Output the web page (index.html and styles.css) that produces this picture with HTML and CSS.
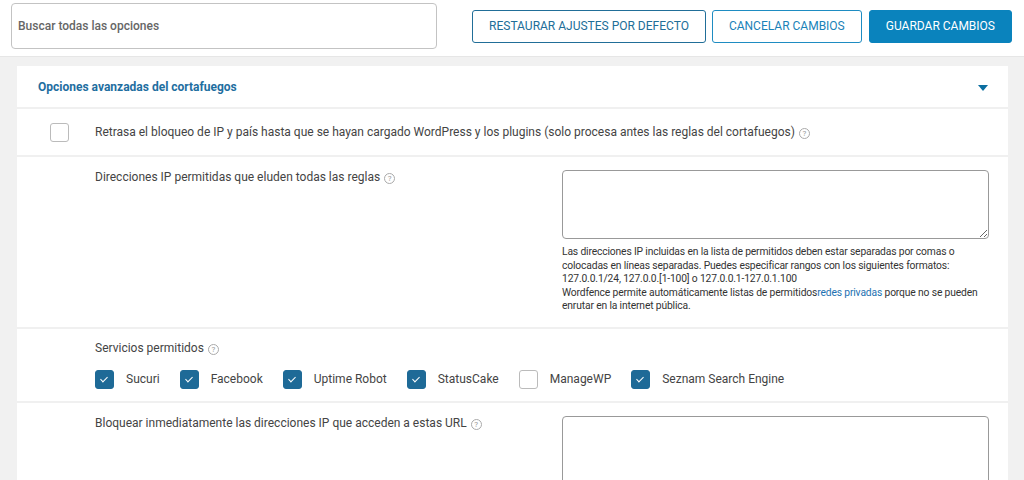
FILE: index.html
```html
<!DOCTYPE html>
<html lang="es">
<head>
    <meta charset="UTF-8">
    <title>Opciones del cortafuegos</title>
    <link rel="stylesheet" href="styles.css">
</head>
<body>

    <div class="topbar">
        <input class="search" type="text" placeholder="Buscar todas las opciones">
        <div class="actions">
            <a class="btn">Restaurar ajustes por defecto</a>
            <a class="btn btn-light">Cancelar cambios</a>
            <a class="btn btn-primary">Guardar cambios</a>
        </div>
    </div>

    <div class="page">
        <div class="panel">
            <div class="panel-head">
                <h3>Opciones avanzadas del cortafuegos</h3>
                <span class="caret"></span>
            </div>

            <!-- delay blocking -->
            <div class="row row-check">
                <span class="box"></span>
                <span class="label">Retrasa el bloqueo de IP y país hasta que se hayan cargado WordPress y los plugins (solo procesa antes las reglas del cortafuegos) <span class="help">?</span></span>
            </div>

            <!-- allowlisted IPs -->
            <div class="row row-split">
                <div class="label">Direcciones IP permitidas que eluden todas las reglas <span class="help">?</span></div>
                <div class="field">
                    <textarea></textarea>
                    <p class="note">Las direcciones IP incluidas en la lista de permitidos deben estar separadas por comas o colocadas en líneas separadas. Puedes especificar rangos con los siguientes formatos: 127.0.0.1/24, 127.0.0.[1-100] o 127.0.0.1-127.0.1.100<br>Wordfence permite automáticamente listas de permitidos<a href="#">redes privadas</a> porque no se pueden enrutar en la internet pública.</p>
                </div>
            </div>

            <!-- allowed services -->
            <div class="row row-services">
                <div class="label">Servicios permitidos <span class="help">?</span></div>
                <div class="services">
                    <span class="service"><span class="box checked"></span>Sucuri</span>
                    <span class="service"><span class="box checked"></span>Facebook</span>
                    <span class="service"><span class="box checked"></span>Uptime Robot</span>
                    <span class="service"><span class="box checked"></span>StatusCake</span>
                    <span class="service"><span class="box"></span>ManageWP</span>
                    <span class="service"><span class="box checked"></span>Seznam Search Engine</span>
                </div>
            </div>

            <!-- block URLs -->
            <div class="row row-split">
                <div class="label">Bloquear inmediatamente las direcciones IP que acceden a estas URL <span class="help">?</span></div>
                <div class="field">
                    <textarea class="tall"></textarea>
                </div>
            </div>
        </div>
    </div>

</body>
</html>
```

FILE: styles.css
```css
body {
    margin: 0;
    font-family: Roboto, "Liberation Sans", Arial, sans-serif;
    font-size: 12px;
    color: #444;
    background-color: #f1f1f1;
}

.topbar {
    display: flex;
    justify-content: space-between;
    align-items: center;
    height: 57px;
    padding: 0 12px 0 11px;
    background: #fff;
    border-bottom: 1px solid #e6e6e6;
    box-sizing: border-box;
}
.search {
    width: 426px;
    height: 46px;
    margin-top: -5px;
    padding: 0 6px;
    box-sizing: border-box;
    border: 1px solid #c3c3c3;
    border-radius: 4px;
    font-family: inherit;
    font-size: 12px;
    font-weight: 500;
}
.search::placeholder {
    color: #666;
}
.actions {
    display: flex;
    gap: 6px;
    margin-top: -3px;
}
.btn {
    display: block;
    height: 33px;
    line-height: 31px;
    padding: 0 16px;
    box-sizing: border-box;
    border: 1px solid #216e98;
    border-radius: 3px;
    color: #216e98;
    text-transform: uppercase;
    font-size: 12px;
    white-space: nowrap;
    cursor: pointer;
}
.btn-light {
    border-color: #1e8cc2;
    color: #1a82b8;
}
.btn-primary {
    background: #0a83bd;
    border-color: #0a83bd;
    color: #fff;
    margin-left: 1px;
}

.page {
    padding: 9px 16px 0 17px;
}
.panel {
    background: #fff;
}
.panel-head {
    display: flex;
    justify-content: space-between;
    align-items: center;
    height: 41px;
    padding: 0 20px 0 21px;
}
.panel-head h3 {
    margin: 0;
    font-size: 12px;
    font-weight: 700;
    color: #1e6e9f;
}
.caret {
    width: 0;
    height: 0;
    border-left: 5px solid transparent;
    border-right: 5px solid transparent;
    border-top: 6px solid #0b6ea0;
    margin-top: 2px;
}

.row {
    border-top: 2px solid #f0f0f0;
}
.row-check {
    display: flex;
    align-items: center;
    gap: 26px;
    height: 46px;
    padding-left: 33px;
}
.row-split {
    display: flex;
    justify-content: space-between;
    padding: 13px 19px 14px 78px;
}
.field {
    width: 427px;
}
textarea {
    display: block;
    width: 100%;
    height: 69px;
    box-sizing: border-box;
    border: 1px solid #999;
    border-radius: 4px;
    resize: vertical;
}
textarea.tall {
    height: 90px;
}
.note {
    margin: 6px 0 0;
    font-size: 10.3px;
    letter-spacing: -0.15px;
    line-height: 13.5px;
    color: #333;
}
.note a {
    color: #2271b1;
    text-decoration: none;
}

.row-services {
    padding: 12px 0 12px 78px;
}
.services {
    display: flex;
    gap: 20px;
    margin-top: 15px;
}
.service {
    display: flex;
    align-items: center;
    gap: 12px;
}

.box {
    display: inline-block;
    width: 19px;
    height: 19px;
    box-sizing: border-box;
    border: 1px solid #bbb;
    border-radius: 3px;
    background: #fff;
    position: relative;
}
.box.checked {
    background: #1e6a97;
    border-color: #1e6a97;
}
.box.checked::after {
    content: "";
    position: absolute;
    left: 6px;
    top: 4px;
    width: 3px;
    height: 6px;
    border: solid #fff;
    border-width: 0 1px 1px 0;
    transform: rotate(45deg);
}

.help {
    display: inline-block;
    width: 9px;
    height: 9px;
    border: 1px solid #aaa;
    border-radius: 50%;
    color: #999;
    font-size: 8px;
    line-height: 9px;
    text-align: center;
    vertical-align: 0;
    margin-left: 1px;
}
```
